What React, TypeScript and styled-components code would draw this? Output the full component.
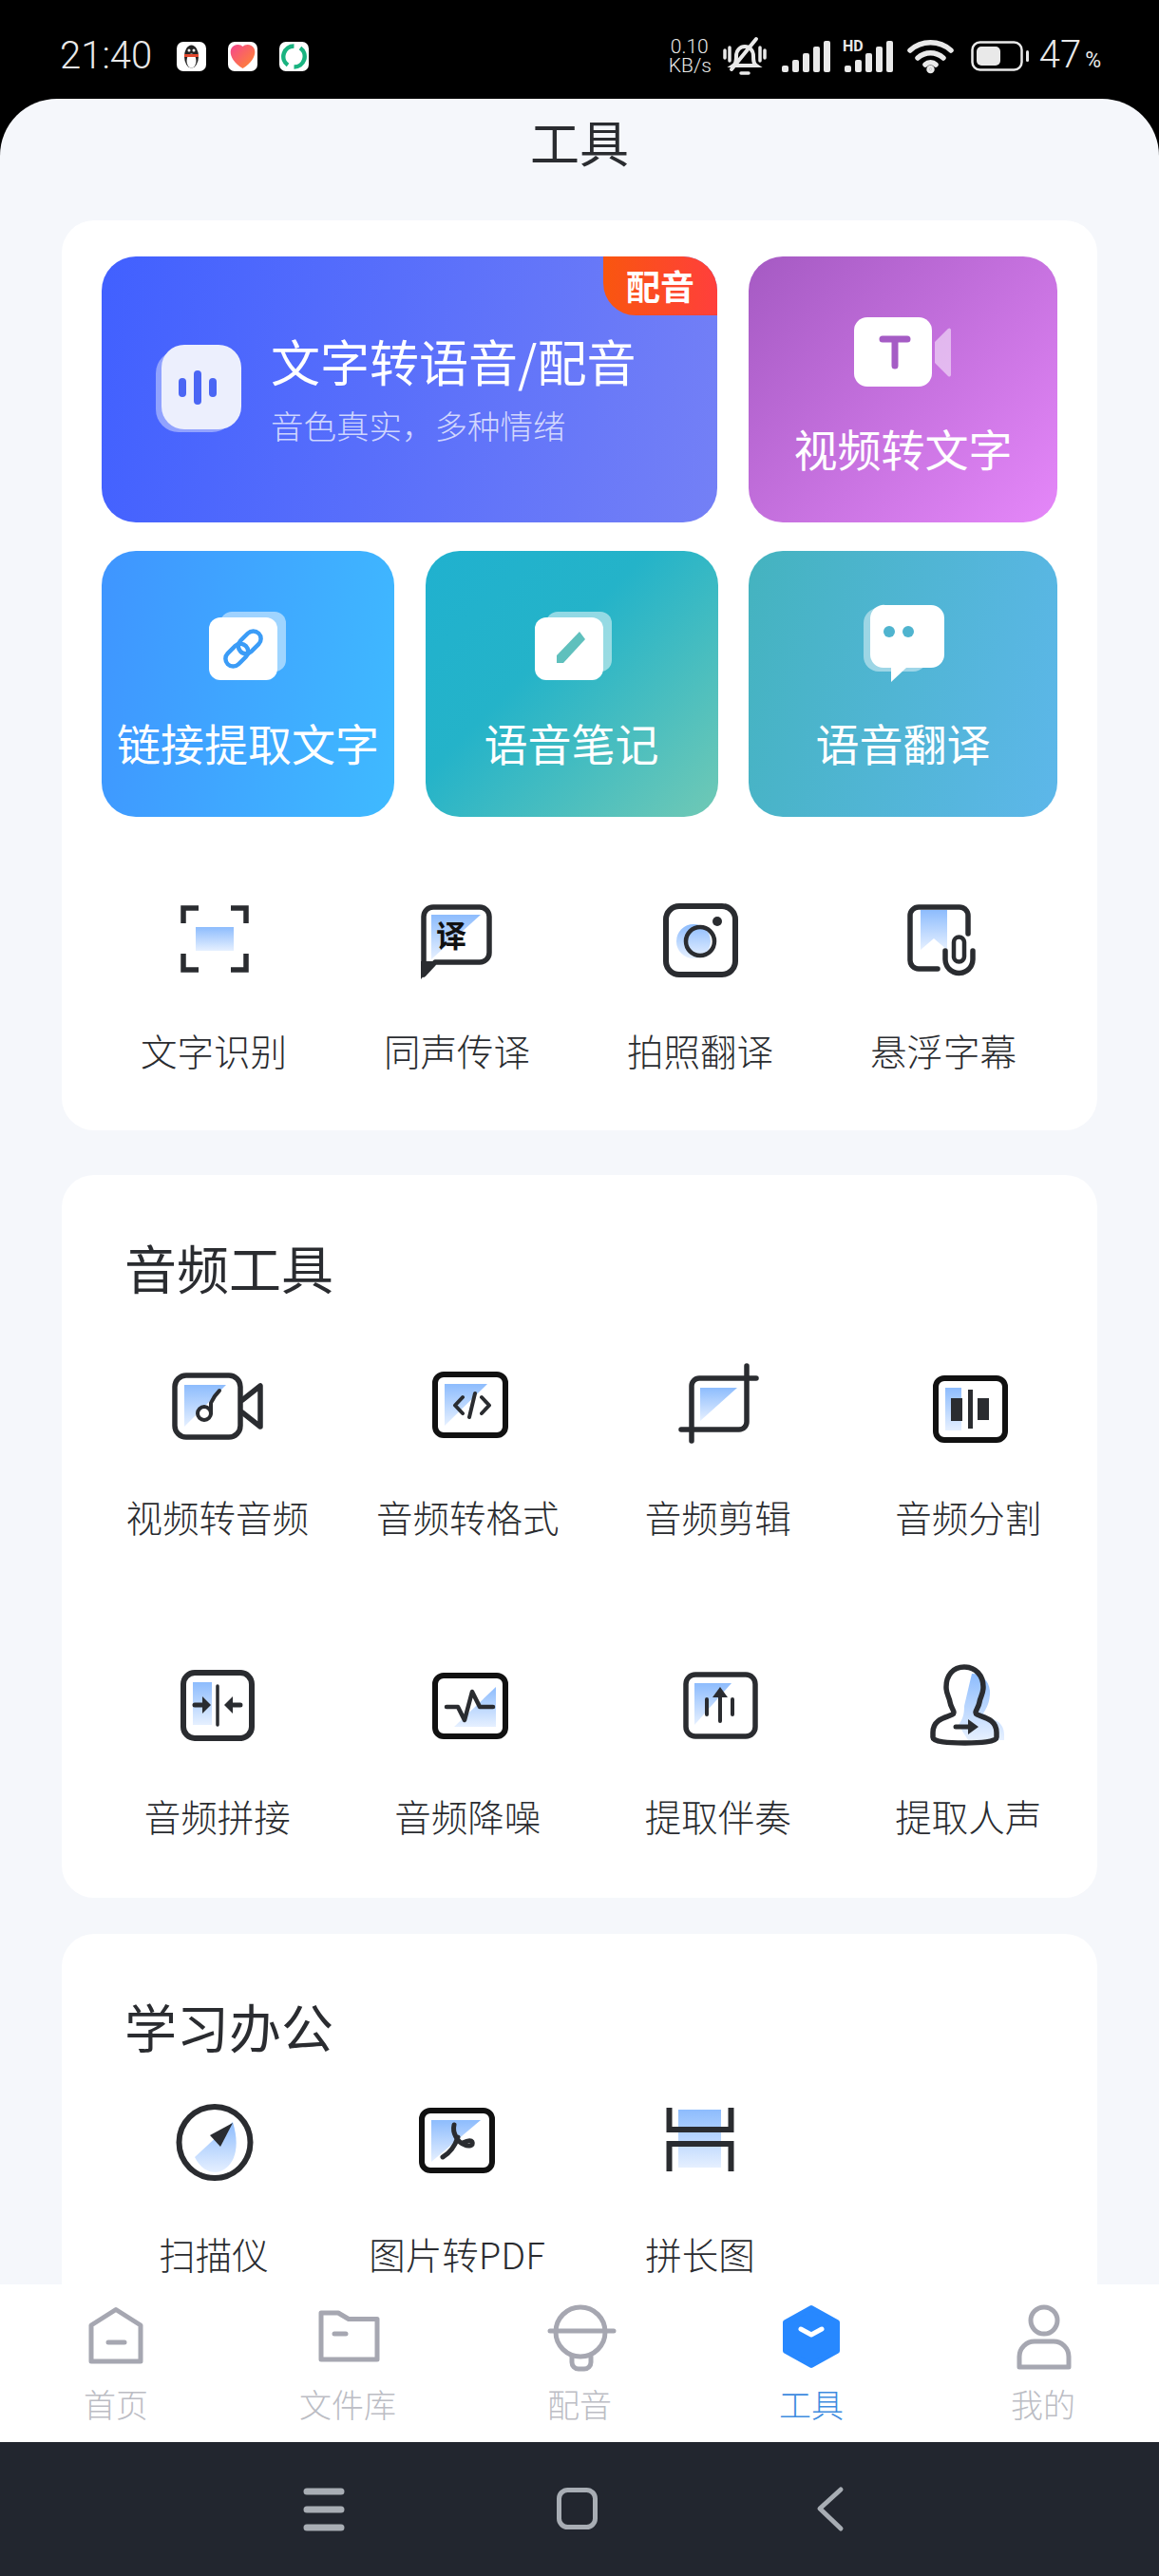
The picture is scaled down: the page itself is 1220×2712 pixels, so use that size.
import React from "react";
import styled, { createGlobalStyle } from "styled-components";

const INK = "#2a2c30";

const GlobalStyle = createGlobalStyle`
  html, body {
    margin: 0;
    padding: 0;
    background: #000;
    font-family: "Noto Sans CJK SC", "Noto Sans", sans-serif;
  }
  * { box-sizing: border-box; }
`;

const Page = styled.div`
  width: 1220px;
  height: 2712px;
  display: flex;
  flex-direction: column;
  overflow: hidden;
  background: #000;
`;

const StatusBar = styled.div`
  height: 104px;
  flex: none;
  display: flex;
  align-items: center;
  justify-content: space-between;
  padding: 14px 61px 0 63px;
  color: #e9e9e9;
`;

const StatusLeft = styled.div`
  display: flex;
  align-items: center;
`;

const Time = styled.span`
  font-family: Roboto, sans-serif;
  font-weight: 300;
  font-size: 40px;
  line-height: 40px;
  width: 100px;
  margin-right: 23px;
`;

const AppBadge = styled.span`
  width: 31px;
  height: 31px;
  border-radius: 7px;
  background: #fff;
  margin-right: 23px;
  display: flex;
  align-items: center;
  justify-content: center;
`;

const StatusRight = styled.div`
  display: flex;
  align-items: center;
`;

const NetSpeed = styled.span`
  font-family: Roboto, sans-serif;
  font-weight: 300;
  font-size: 21px;
  line-height: 20px;
  width: 44px;
  margin-right: 12px;
  white-space: nowrap;
  text-align: center;
`;

const StatusIcon = styled.svg<{ $gap: number }>`
  display: block;
  flex: none;
  overflow: visible;
  margin-right: ${(p) => p.$gap}px;
`;

const Percent = styled.span`
  font-family: Roboto, sans-serif;
  font-weight: 300;
  font-size: 40px;
  line-height: 40px;
  margin-top: 4px;
  small {
    font-size: 23px;
    margin-left: 4px;
    font-weight: 400;
  }
`;

const Sheet = styled.div`
  flex: 1;
  min-height: 0;
  overflow: hidden;
  background: #f5f7fb;
  border-radius: 60px 60px 0 0;
  padding: 15px 65px 0;
`;

const PageTitle = styled.h1`
  margin: 0 0 53px;
  text-align: center;
  font-size: 52px;
  line-height: 60px;
  font-weight: 400;
  color: ${INK};
`;

const Card = styled.section<{ $top: number; $pad: string }>`
  background: #fff;
  border-radius: 34px;
  margin-top: ${(p) => p.$top}px;
  padding: ${(p) => p.$pad};
`;

const FeatureRow = styled.div`
  display: flex;
  justify-content: space-between;
  margin-bottom: 30px;
  padding: 0 42px;
`;

const Banner = styled.div`
  position: relative;
  width: 648px;
  height: 280px;
  border-radius: 36px;
  overflow: hidden;
  background: linear-gradient(100deg, #4160ff 0%, #7480f6 100%);
  display: flex;
  align-items: center;
  padding-left: 50px;
  color: #fff;
`;

const BannerText = styled.div`
  margin-left: 28px;
  margin-top: -3px;
`;

const BannerTitle = styled.div`
  font-size: 52px;
  line-height: 64px;
  font-weight: 400;
  white-space: nowrap;
`;

const BannerSub = styled.div`
  font-size: 34.5px;
  line-height: 46px;
  margin-top: 12px;
  font-weight: 300;
  color: rgba(255, 255, 255, 0.72);
  white-space: nowrap;
`;

const Badge = styled.span`
  position: absolute;
  top: 0;
  right: 0;
  width: 120px;
  height: 62px;
  border-radius: 0 0 0 34px;
  background: linear-gradient(90deg, #f9560f, #ff3f3c);
  font-size: 36px;
  line-height: 60px;
  font-weight: 700;
  text-align: center;
`;

const Tile = styled.div<{ $width: number; $bg: string }>`
  width: ${(p) => p.$width}px;
  height: 280px;
  border-radius: 36px;
  background: ${(p) => p.$bg};
  display: flex;
  flex-direction: column;
  align-items: center;
  padding-top: 55px;
  color: #fff;
`;

const TileLabel = styled.div`
  margin-top: 26px;
  font-size: 46px;
  line-height: 60px;
  white-space: nowrap;
`;

const ToolGrid = styled.div<{ $col: number; $rowGap: number; $left: number; $top: number }>`
  display: grid;
  grid-template-columns: repeat(4, ${(p) => p.$col}px);
  row-gap: ${(p) => p.$rowGap}px;
  margin-left: ${(p) => p.$left}px;
  margin-top: ${(p) => p.$top}px;
`;

const Tool = styled.div`
  display: flex;
  flex-direction: column;
  align-items: center;
`;

const ToolLabel = styled.div`
  margin-top: 45px;
  font-size: 38.5px;
  line-height: 50px;
  color: ${INK};
  font-weight: 300;
  white-space: nowrap;
`;

const SectionTitle = styled.h2`
  margin: 0 0 0 66px;
  font-size: 55px;
  line-height: 70px;
  font-weight: 400;
  color: ${INK};
`;

const TabBar = styled.nav`
  height: 166px;
  flex: none;
  background: #fff;
  display: grid;
  grid-template-columns: repeat(5, 1fr);
  padding: 20px 0 0;
  margin-top: -1px;
`;

const Tab = styled.div<{ $active?: boolean }>`
  display: flex;
  flex-direction: column;
  align-items: center;
  color: ${(p) => (p.$active ? "#3f8cdf" : "#bcbdc4")};
`;

const TabLabel = styled.span`
  margin-top: 9px;
  font-size: 34px;
  line-height: 44px;
  font-weight: 300;
`;

const NavBar = styled.div`
  height: 141px;
  flex: none;
  background: #22262f;
  display: flex;
  align-items: center;
  justify-content: center;
  gap: 186px;
  padding-right: 6px;
`;

const NavButton = styled.svg`
  display: block;
  width: 80px;
  height: 60px;
`;

const stroke = { fill: "none", stroke: INK, strokeWidth: 5.5, strokeLinecap: "round", strokeLinejoin: "round" } as const;
const black = { ...stroke, stroke: "#111", strokeWidth: 6 };

function Icon({ children }: { children: React.ReactNode }) {
  return (
    <svg width={100} height={90} viewBox="-10 -5 100 90" style={{ display: "block", overflow: "visible" }}>
      <defs>
        <linearGradient id="fade" x1="0" y1="0" x2="0" y2="1">
          <stop offset="0" stopColor="#8dbcfd" />
          <stop offset="1" stopColor="#e6f0ff" />
        </linearGradient>
      </defs>
      {children}
    </svg>
  );
}

const TOOLS_ONE: [string, React.ReactNode][] = [
  [
    "文字识别",
    <>
      <rect x={21} y={26} width={40} height={25} fill="url(#fade)" />
      <path {...stroke} strokeLinecap="butt" strokeLinejoin="miter" d="M24 6H8V22M58 6H74V22M8 54V71H24M74 54V71H58" />
    </>,
  ],
  [
    "同声传译",
    <>
      <polygon points="13,13 65,13 13,60" fill="url(#fade)" />
      <path {...stroke} d="M5 76V15a10 10 0 0 1 10-10H64a10 10 0 0 1 10 10V53a10 10 0 0 1-10 10H17Z" />
      <polygon points="2,81 2,62 18,62" fill={INK} />
      <text x={34} y={47} fontSize={32} fontWeight={700} textAnchor="middle" fill="#111">译</text>
    </>,
  ],
  [
    "拍照翻译",
    <>
      <circle cx={33} cy={41} r={18} fill="url(#fade)" />
      <rect x={4} y={4} width={73} height={72} rx={14} {...stroke} strokeWidth={6} />
      <circle cx={40} cy={41} r={15} {...stroke} strokeWidth={4.5} />
      <circle cx={58} cy={20} r={5} fill={INK} />
    </>,
  ],
  [
    "悬浮字幕",
    <>
      <polygon points="16,8 44,8 44,50 30,38 16,50" fill="url(#fade)" />
      <path {...stroke} d="M66 33V14a9 9 0 0 0-9-9H14a9 9 0 0 0-9 9V61a9 9 0 0 0 9 9H34" />
      <path {...stroke} strokeWidth={4.5} d="M51 58V42a5.5 5.5 0 0 1 11 0V57a5.5 5.5 0 0 1-11 0" />
      <path {...stroke} d="M42 51V60a14 14 0 0 0 29 0V51" />
    </>,
  ],
];

const TOOLS_AUDIO: [string, React.ReactNode][] = [
  [
    "视频转音频",
    <>
      <polygon points="5,17 49,17 5,61" fill="url(#fade)" />
      <rect x={-5} y={7} width={69} height={65} rx={12} {...stroke} />
      <path {...stroke} d="M66 33L85 18V61L66 46" />
      <circle cx={26} cy={47} r={7} {...stroke} strokeWidth={4} />
      <path {...stroke} strokeWidth={4} d="M33 47V36Q36 29 42 23" />
    </>,
  ],
  [
    "音频转格式",
    <>
      <polygon points="16,16 61,16 16,60" fill="url(#fade)" />
      <rect x={6} y={6} width={74} height={64} rx={9} {...black} />
      <path {...stroke} strokeWidth={4} d="M35 30L27 38.5L35 47M55 30L63 38.5L55 47M48 26L42 51" />
    </>,
  ],
  [
    "音频剪辑",
    <>
      <polygon points="21,20 60,20 21,55" fill="url(#fade)" />
      <path {...stroke} d="M12 76V18a8 8 0 0 1 8-8H80M1 64H62a8 8 0 0 0 8-8V-3" />
    </>,
  ],
  [
    "音频分割",
    <>
      <rect x={16} y={20} width={17} height={45} fill="url(#fade)" />
      <rect x={6} y={10} width={73} height={65} rx={9} {...black} />
      <rect x={22} y={31} width={12} height={24} fill={INK} />
      <rect x={40} y={22} width={5} height={41} fill={INK} />
      <rect x={50} y={31} width={12} height={23} fill={INK} />
    </>,
  ],
  [
    "音频拼接",
    <>
      <rect x={14} y={15} width={20} height={45} fill="url(#fade)" />
      <rect x={4} y={5} width={72} height={69} rx={12} {...stroke} strokeWidth={6} />
      <path {...stroke} strokeWidth={3.5} d="M40 19V60" />
      <path {...stroke} strokeWidth={5} d="M16 39H24M64 39H56" />
      <polygon points="24,30 33,39 24,48" fill={INK} />
      <polygon points="56,30 47,39 56,48" fill={INK} />
    </>,
  ],
  [
    "音频降噪",
    <>
      <polygon points="70,20 70,62 26,62" fill="url(#fade)" />
      <rect x={6} y={8} width={74} height={64} rx={9} {...black} />
      <path {...stroke} strokeWidth={4.5} d="M18 41H30L37 55L45 25L53 41H67" />
    </>,
  ],
  [
    "提取伴奏",
    <>
      <polygon points="15,16 54,16 15,60" fill="url(#fade)" />
      <rect x={6} y={7} width={73} height={65} rx={10} {...stroke} strokeWidth={5.5} />
      <path {...stroke} strokeWidth={4} d="M42 30V56M28 33V49M55 33V49" />
      <polygon points="34,31 42,20 50,31" fill={INK} />
    </>,
  ],
  [
    "提取人声",
    <>
      <path fill="url(#fade)" d="M44 6C54 6 64 14 63 28C62 40 58 44 56 48C62 54 78 54 78 70V76H40L30 60C34 54 36 50 36 40Z" />
      <path {...stroke} d="M36 -1C24 -1 17 8 17 20C17 28 20 30 21 36C22 42 25 44 25 47C25 52 3 50 3 68V73C3 78 20 79 36 79C52 79 70 78 70 73V68C70 50 48 52 48 47C48 44 51 42 52 36C53 30 56 28 56 20C56 8 48 -1 36 -1Z" />
      <path {...stroke} strokeWidth={5} d="M27 62H40" />
      <polygon points="40,54 51,62 40,70" fill={INK} />
    </>,
  ],
];

const TOOLS_OFFICE: [string, React.ReactNode][] = [
  [
    "扫描仪",
    <>
      <path fill="url(#fade)" d="M60 17L20 54C26 66 34 70 42 70C58 68 70 50 60 17Z" />
      <circle cx={41} cy={38.5} r={37.5} {...stroke} strokeWidth={6} />
      <polygon points="60,18 36,31 47,43" fill={INK} />
    </>,
  ],
  [
    "图片转PDF",
    <>
      <polygon points="13,15 65,15 13,59" fill="url(#fade)" />
      <rect x={3} y={5} width={74} height={63} rx={9} {...black} />
      <path {...stroke} strokeWidth={5} d="M37 20C35 28 40 38 48 41C52 43 58 42 56 38C54 35 48 38 46 39" />
      <path {...stroke} strokeWidth={5} d="M41 33C38 42 32 50 25 54" />
    </>,
  ],
  [
    "拼长图",
    <>
      <rect x={17} y={4} width={45} height={61} fill="url(#fade)" />
      <path {...stroke} strokeLinecap="butt" strokeLinejoin="miter" strokeWidth={6} d="M7.5 2V25H72.5V2M7.5 69V40H72.5V69" />
    </>,
  ],
];

const TABS: { label: string; active?: boolean; icon: React.ReactNode }[] = [
  {
    label: "首页",
    icon: (
      <>
        <path d="M40 6.5L66 23V61H14V23Z" />
        <path d="M32 41H49" />
      </>
    ),
  },
  {
    label: "文件库",
    icon: (
      <>
        <path d="M12 10H30L41 16.5H71V59H12Z" />
        <path d="M26 32H38" />
      </>
    ),
  },
  {
    label: "配音",
    icon: (
      <>
        <circle cx={41} cy={30} r={26} />
        <path d="M9 29H76M32 56V62a7 7 0 0 0 7 7h6a7 7 0 0 0 7-7V56" />
      </>
    ),
  },
  {
    label: "工具",
    active: true,
    icon: (
      <>
        <path d="M40 5L67 20V50L40 65L13 50V20Z" fill="#2788ff" stroke="#2788ff" strokeWidth={6} />
        <path d="M29 27L40 33L51 27" stroke="#fff" />
      </>
    ),
  },
  {
    label: "我的",
    icon: (
      <>
        <circle cx={41} cy={18} r={14} />
        <path d="M15 67V56a16 16 0 0 1 16-16H51a16 16 0 0 1 16 16V67Z" />
      </>
    ),
  },
];

function Signal({ hd }: { hd?: boolean }) {
  const bars = [
    [0, 26],
    [11, 20],
    [22, 13],
    [33, 6],
    [44, 0],
  ];
  return (
    <StatusIcon $gap={15} width={51} height={33} viewBox="0 0 51 33">
      {bars.map(([x, y]) => (
        <rect key={x} x={x} y={y} width={7} height={33 - y} rx={2} fill="#e9e9e9" />
      ))}
      {hd && (
        <text x={-2} y={11} fontFamily="Roboto, sans-serif" fontWeight={700} fontSize={16} fill="#e9e9e9">
          HD
        </text>
      )}
    </StatusIcon>
  );
}

export default function App() {
  return (
    <Page>
      <GlobalStyle />
      <StatusBar>
        <StatusLeft>
          <Time>21:40</Time>
          <AppBadge>
            <svg width={23} height={27} viewBox="0 0 23 27">
              <ellipse cx={11.5} cy={13.5} rx={7.5} ry={12} fill="#222" />
              <ellipse cx={11.5} cy={18} rx={5} ry={7.5} fill="#fff" />
              <rect x={4} y={11} width={15} height={3} fill="#e2492f" />
              <circle cx={9} cy={7} r={1.5} fill="#fff" />
              <circle cx={14} cy={7} r={1.5} fill="#fff" />
            </svg>
          </AppBadge>
          <AppBadge>
            <svg width={29} height={29} viewBox="0 0 29 29">
              <defs>
                <linearGradient id="rose" x1="0" y1="0" x2="1" y2="1">
                  <stop offset="0" stopColor="#f5468f" />
                  <stop offset="1" stopColor="#ff8a2b" />
                </linearGradient>
              </defs>
              <path d="M14.5 4C17 1 24 1 26.500 6S26 20 14.500 27C3 20 0 11 2.500 6S12 1 14.500 4Z" fill="url(#rose)" />
            </svg>
          </AppBadge>
          <AppBadge>
            <svg width={27} height={27} viewBox="0 0 27 27">
              <path d="M13.500 2.500A11 11 0 0 0 7 22.500" fill="none" stroke="#19b380" strokeWidth={4.500} />
              <path d="M13.500 24.500A11 11 0 0 0 20 4.500" fill="none" stroke="#19b380" strokeWidth={4.500} />
            </svg>
          </AppBadge>
        </StatusLeft>
        <StatusRight>
          <NetSpeed>
            0.10
            <br />
            KB/s
          </NetSpeed>
          <StatusIcon $gap={15} width={48} height={41} viewBox="0 0 48 41" fill="none" stroke="#e9e9e9" strokeLinecap="round">
            <path strokeWidth={4} d="M12 30c3-2 3-5 3-10 0-6 4-10 9-10s9 4 9 10c0 5 0 8 3 10z" />
            <path strokeWidth={4} d="M36 2L10 34" />
            <path strokeWidth={3.500} d="M3 14v8M8 11v14M40 11v14M45 14v8M20 38h8" />
          </StatusIcon>
          <Signal />
          <Signal hd />
          <StatusIcon $gap={18} width={49} height={36} viewBox="0 0 49 36" fill="none" stroke="#e9e9e9" strokeWidth={5.500} strokeLinecap="round">
            <path d="M3 12C15 1 34 1 46 12" />
            <path d="M11 20C19 13 30 13 38 20" />
            <path d="M19 27C22 24 27 24 30 27" />
            <circle cx={24.500} cy={32} r={1.500} fill="#e9e9e9" />
          </StatusIcon>
          <StatusIcon $gap={10} width={62} height={32} viewBox="0 0 62 32">
            <rect x={1.500} y={1.500} width={52} height={29} rx={8} fill="none" stroke="#e9e9e9" strokeWidth={2.500} />
            <rect x={6} y={6} width={25} height={20} rx={5} fill="#e9e9e9" />
            <rect x={58} y={10} width={3} height={12} rx={1.500} fill="#e9e9e9" />
          </StatusIcon>
          <Percent>
            47<small>%</small>
          </Percent>
        </StatusRight>
      </StatusBar>

      <Sheet>
        <PageTitle>工具</PageTitle>

        <Card $top={0} $pad="38px 0 60px">
          <FeatureRow>
            <Banner>
              <svg width={100} height={100} viewBox="0 0 100 100">
                <rect x={7} y={9} width={83} height={86} rx={24} fill="rgba(255,255,255,0.4)" />
                <rect x={13} y={3} width={84} height={89} rx={24} fill="#eceffd" />
                <rect x={31} y={38} width={8} height={20} rx={4} fill="#4a66f4" />
                <rect x={47} y={30} width={8} height={36} rx={4} fill="#4a66f4" />
                <rect x={63} y={38} width={8} height={20} rx={4} fill="#4a66f4" />
              </svg>
              <BannerText>
                <BannerTitle>文字转语音/配音</BannerTitle>
                <BannerSub>音色真实，多种情绪</BannerSub>
              </BannerText>
              <Badge>配音</Badge>
            </Banner>
            <Tile $width={325} $bg="linear-gradient(135deg, #a55ac3 0%, #e587f9 100%)">
              <svg width={100} height={90} viewBox="0 0 100 90" style={{ overflow: "visible" }}>
                <path d="M83 35L97 21a2 2 0 0 1 3 1V70a2 2 0 0 1-3 1L83 57Z" fill="rgba(255,255,255,0.5)" />
                <rect x={-2} y={9} width={82} height={73} rx={14} fill="#fff" />
                <path d="M28 32H54M41 32V60" fill="none" stroke="#a55cc5" strokeWidth={7} strokeLinecap="round" />
              </svg>
              <TileLabel>视频转文字</TileLabel>
            </Tile>
          </FeatureRow>
          <FeatureRow>
            <Tile $width={308} $bg="linear-gradient(100deg, #3f95ff 0%, #3fbaff 100%)">
              <svg width={100} height={90} viewBox="0 0 100 90">
                <rect x={21} y={9} width={69} height={63} rx={12} fill="rgba(255,255,255,0.5)" />
                <rect x={9} y={15} width={72} height={66} rx={12} fill="#fff" />
                <g fill="none" stroke="#3b9cf7" strokeWidth={4.500} transform="rotate(-45 45 48)">
                  <rect x={22} y={40} width={27} height={16} rx={8} />
                  <rect x={41} y={40} width={27} height={16} rx={8} />
                </g>
              </svg>
              <TileLabel>链接提取文字</TileLabel>
            </Tile>
            <Tile $width={308} $bg="linear-gradient(135deg, #20b1cf 0%, #24b3c9 40%, #70c9b5 100%)">
              <svg width={100} height={90} viewBox="0 0 100 90">
                <rect x={23} y={9} width={69} height={63} rx={12} fill="rgba(255,255,255,0.5)" />
                <rect x={11} y={15} width={72} height={66} rx={12} fill="#fff" />
                <polygon points="58,30 64,38 41,63 34,63 34,55" fill="#5fc0bd" />
              </svg>
              <TileLabel>语音笔记</TileLabel>
            </Tile>
            <Tile $width={325} $bg="linear-gradient(105deg, #44b3bf 0%, #5db7ea 100%)">
              <svg width={100} height={90} viewBox="0 0 100 90">
                <path d="M24 5H60a16 16 0 0 1 16 16V56a16 16 0 0 1-16 16H24A16 16 0 0 1 8 56V21A16 16 0 0 1 24 5Z" fill="rgba(255,255,255,0.45)" />
                <path d="M31 2H79a14 14 0 0 1 14 14V54a14 14 0 0 1-14 14H53L37 83V68H29A14 14 0 0 1 15 54V16A14 14 0 0 1 31 2Z" fill="#fff" />
                <circle cx={35} cy={30} r={6} fill="#4fb4cf" />
                <circle cx={55} cy={30} r={6} fill="#4fb4cf" />
              </svg>
              <TileLabel>语音翻译</TileLabel>
            </Tile>
          </FeatureRow>
          <ToolGrid $col={256} $rowGap={0} $left={32} $top={85}>
            {TOOLS_ONE.map(([label, art]) => (
              <Tool key={label}>
                <Icon>{art}</Icon>
                <ToolLabel>{label}</ToolLabel>
              </Tool>
            ))}
          </ToolGrid>
        </Card>

        <Card $top={47} $pad="61px 0 62px">
          <SectionTitle>音频工具</SectionTitle>
          <ToolGrid $col={263.500} $rowGap={130} $left={32} $top={68}>
            {TOOLS_AUDIO.map(([label, art]) => (
              <Tool key={label}>
                <Icon>{art}</Icon>
                <ToolLabel>{label}</ToolLabel>
              </Tool>
            ))}
          </ToolGrid>
        </Card>

        <Card $top={38} $pad="61px 0 60px">
          <SectionTitle>学习办公</SectionTitle>
          <ToolGrid $col={256} $rowGap={0} $left={32} $top={45}>
            {TOOLS_OFFICE.map(([label, art]) => (
              <Tool key={label}>
                <Icon>{art}</Icon>
                <ToolLabel>{label}</ToolLabel>
              </Tool>
            ))}
          </ToolGrid>
        </Card>
      </Sheet>

      <TabBar>
        {TABS.map((tab) => (
          <Tab key={tab.label} $active={tab.active}>
            <svg width={80} height={75} viewBox="0 0 80 75" fill="none" stroke="#a6a7b1" strokeWidth={5} strokeLinecap="round" strokeLinejoin="round" style={{ display: "block" }}>
              {tab.icon}
            </svg>
            <TabLabel>{tab.label}</TabLabel>
          </Tab>
        ))}
      </TabBar>

      <NavBar>
        <NavButton viewBox="0 0 80 60">
          <path d="M22 11H58M22 30H58M22 49H58" stroke="#a8adb4" strokeWidth={7} strokeLinecap="round" />
        </NavButton>
        <NavButton viewBox="0 0 80 60">
          <rect x={21.500} y={9.500} width={38} height={39} rx={9} fill="none" stroke="#a8adb4" strokeWidth={5} />
        </NavButton>
        <NavButton viewBox="0 0 80 60">
          <path d="M52 9L30 29L52 50" fill="none" stroke="#a8adb4" strokeWidth={5} strokeLinecap="round" strokeLinejoin="round" />
        </NavButton>
      </NavBar>
    </Page>
  );
}
